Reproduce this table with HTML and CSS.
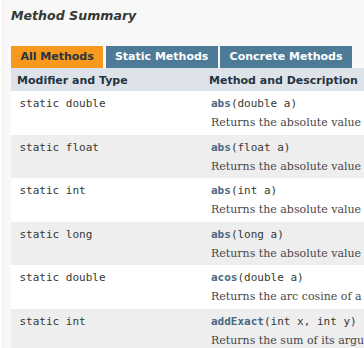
FILE: index.html
```html
<!DOCTYPE html>
<html>
<head>
<meta charset="utf-8">
<link rel="stylesheet" href="styles.css">
</head>
<body>
<div class="block-list">
  <h3 class="summary-title">Method Summary</h3>
  <div class="tabs">
    <span class="tab tab-active">All Methods</span>
    <span class="tab">Static Methods</span>
    <span class="tab">Concrete Methods</span>
  </div>
  <table class="member-summary">
    <colgroup><col class="col-first"><col class="col-last"></colgroup>
    <thead>
      <tr><th>Modifier and Type</th><th>Method and Description</th></tr>
    </thead>
    <tbody>
      <tr class="row-color">
        <td><code>static double</code></td>
        <td><code><span class="name">abs</span>(double a)</code><div class="desc">Returns the absolute value of a double value.</div></td>
      </tr>
      <tr class="alt-color">
        <td><code>static float</code></td>
        <td><code><span class="name">abs</span>(float a)</code><div class="desc">Returns the absolute value of a float value.</div></td>
      </tr>
      <tr class="row-color">
        <td><code>static int</code></td>
        <td><code><span class="name">abs</span>(int a)</code><div class="desc">Returns the absolute value of an int value.</div></td>
      </tr>
      <tr class="alt-color">
        <td><code>static long</code></td>
        <td><code><span class="name">abs</span>(long a)</code><div class="desc">Returns the absolute value of a long value.</div></td>
      </tr>
      <tr class="row-color">
        <td><code>static double</code></td>
        <td><code><span class="name">acos</span>(double a)</code><div class="desc">Returns the arc cosine of a value.</div></td>
      </tr>
      <tr class="alt-color">
        <td><code>static int</code></td>
        <td><code><span class="name">addExact</span>(int x, int y)</code><div class="desc">Returns the sum of its arguments.</div></td>
      </tr>
    </tbody>
  </table>
</div>
</body>
</html>
```

FILE: styles.css
```css
html, body {
  margin: 0;
  padding: 0;
  background: #ffffff;
  overflow: hidden;
}
body {
  width: 364px;
  height: 348px;
  font-family: "DejaVu Sans", Arial, sans-serif;
  color: #353833;
}
.block-list {
  margin-left: 2px;
  border-left: 1px solid #ededed;
  background: #f8f8f8;
  padding: 8px 0 0 8px;
  height: 340px;
  width: 600px;
}
.summary-title {
  margin: 0;
  font-size: 12.6px;
  line-height: 16px;
  font-style: italic;
  font-weight: bold;
  color: #353833;
}
.tabs {
  display: flex;
  margin-top: 22px;
  white-space: nowrap;
}
.tab {
  display: block;
  height: 22px;
  line-height: 22px;
  padding: 0 9.4px;
  margin-right: 2.4px;
  background: #4d7a97;
  color: #ffffff;
  font-size: 11px;
  font-weight: bold;
}
.tab-active {
  background: #f8981d;
  color: #253441;
}
.member-summary {
  border-collapse: collapse;
  border-spacing: 0;
  table-layout: fixed;
  width: 560px;
}
.col-first { width: 192px; }
.member-summary th {
  background: #dee3e9;
  color: #253441;
  font-size: 11px;
  font-weight: bold;
  text-align: left;
  line-height: 13px;
  padding: 6px 3px 4px 6px;
  white-space: nowrap;
}
.member-summary th + th {
  padding-left: 6px;
}
.member-summary td {
  vertical-align: top;
  padding: 6px 0 4.6px 8.5px;
  white-space: nowrap;
}
.member-summary td + td {
  padding-left: 8px;
}
.row-color td { background: #ffffff; }
.alt-color td { background: #eeeeef; }
code {
  font-family: "DejaVu Sans Mono", monospace;
  font-size: 11px;
  line-height: 14px;
  display: block;
  color: #353833;
}
.name {
  font-weight: bold;
  color: #4a6782;
}
.desc {
  margin-top: 5px;
  font-family: "DejaVu Serif", Georgia, serif;
  font-size: 11px;
  line-height: 14px;
  color: #474747;
}
```
